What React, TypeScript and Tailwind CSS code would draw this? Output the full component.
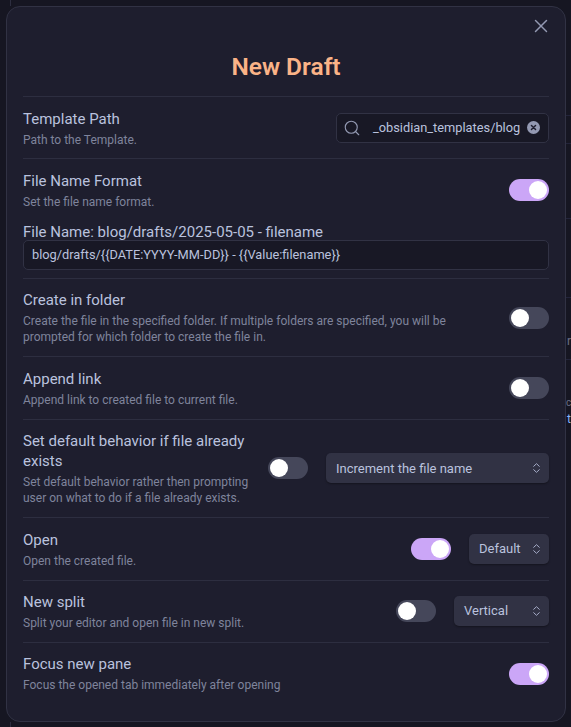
import { Search, X } from "lucide-react";

function Toggle({ on }: { on?: boolean }) {
  return (
    <div className={`flex h-[22px] w-10 shrink-0 items-center rounded-full px-0.5 ${on ? "justify-end bg-[#cba6f7]" : "justify-start bg-[#45475a]"}`}>
      <div className="h-[18px] w-[18px] rounded-full bg-white"></div>
    </div>
  );
}

function Select({ label, width }: { label: string; width: string }) {
  return (
    <div className={`flex h-[30px] shrink-0 items-center justify-between rounded-[5px] bg-[#313244] pl-[10px] pr-[9px] text-[13px] text-[#bac2de] shadow-[0_1px_2px_rgba(0,0,0,0.35)] ${width}`}>
      <span>{label}</span>
      <svg width="7" height="10" viewBox="0 0 7 10" fill="none" stroke="#a6adc8" strokeWidth="1" strokeLinecap="round" strokeLinejoin="round">
        <path d="M0.7 3.3 L3.5 0.7 L6.3 3.3" />
        <path d="M0.7 6.7 L3.5 9.3 L6.3 6.7" />
      </svg>
    </div>
  );
}

function Info({ title, desc }: { title: string; desc: string }) {
  return (
    <div className="min-w-0 flex-1 pb-[10.9px] pt-[11.5px]">
      <div className="text-[15px] leading-[20px] text-[#bac2de]">{title}</div>
      <div className="mt-[3px] text-[12px] leading-[16px] text-[#7f849c]">{desc}</div>
    </div>
  );
}

function Row({ title, desc, children, gap = "gap-[18px]" }: { title: string; desc: string; children?: React.ReactNode; gap?: string }) {
  return (
    <div className={`flex items-center border-t border-[#2d2e40] ${gap}`}>
      <Info title={title} desc={desc} />
      {children}
    </div>
  );
}

export default function App() {
  return (
    <div className="relative h-[727px] w-[571px] overflow-hidden bg-[#161622] pl-[6px] pt-[6px] font-['Roboto',sans-serif]">
      {/* Page showing behind the modal */}
      <div className="absolute left-[10px] top-0 h-[6px] w-px bg-[#2d2e40]"></div>
      <div className="absolute bottom-0 left-[10px] h-[5px] w-px bg-[#2d2e40]"></div>
      <div className="absolute left-[566px] top-[115px] h-px w-[5px] bg-[#23243a]"></div>
      <div className="absolute left-[566px] top-[143px] h-px w-[5px] bg-[#23243a]"></div>
      <div className="absolute left-[566px] top-[218px] h-px w-[5px] bg-[#23243a]"></div>
      <div className="absolute left-[566px] top-[297px] h-px w-[5px] bg-[#23243a]"></div>
      <div className="absolute left-[566px] top-[359px] h-px w-[5px] bg-[#23243a]"></div>
      <div className="absolute left-[567px] top-[333px] text-[12px] leading-[16px] text-[#6c7086]">r</div>
      <div className="absolute left-[566px] top-[395px] text-[10px] leading-[16px] text-[#6c7086]">c</div>
      <div className="absolute left-[567px] top-[411px] text-[12px] leading-[16px] text-[#89b4fa]">t</div>

      <div className="relative h-[716px] w-[560px] rounded-[14px] border border-[#313244] bg-[#1e1e2e] px-4">
        {/* Header */}
        <div className="flex justify-end pt-[8px]">
          <X className="-mr-[3px] h-[22px] w-[22px] text-[#9399b2]" strokeWidth={1.6} />
        </div>
        <h1 className="mt-[14px] text-center text-[24.5px] font-semibold leading-[32px] text-[#fab387]">New Draft</h1>
        <div className="h-[13px]"></div>

        <Row title="Template Path" desc="Path to the Template.">
          <div className="flex h-[30px] w-[213px] shrink-0 items-center rounded-[5px] border border-[#313244] bg-[#181825] pl-[6px] pr-[8px] text-[#bac2de]">
            <Search className="h-[18px] w-[18px] shrink-0 text-[#9399b2]" strokeWidth={1.5} />
            <span className="ml-[12px] flex-1 whitespace-nowrap text-[12.8px]">_obsidian_templates/blog</span>
            <svg width="13" height="13" viewBox="0 0 14 14" className="shrink-0">
              <circle cx="7" cy="7" r="7" fill="#9399b2" />
              <path d="M4.8 4.8 L9.2 9.2 M9.2 4.8 L4.8 9.2" stroke="#1e1e2e" strokeWidth="1.6" strokeLinecap="round" />
            </svg>
          </div>
        </Row>

        <div className="border-t border-[#2d2e40] pb-[8.2px]">
          <div className="flex items-center">
            <Info title="File Name Format" desc="Set the file name format." />
            <Toggle on />
          </div>
          <div className="h-[20px] text-[15px] leading-[22px] text-[#bac2de]">File Name: blog/drafts/2025-05-05 - filename</div>
          <div className="-mt-px flex h-[30px] items-center rounded-[5px] border border-[#313244] bg-[#181825] px-2 text-[12.8px] text-[#bac2de]">
            {"blog/drafts/{{DATE:YYYY-MM-DD}} - {{Value:filename}}"}
          </div>
        </div>

        <Row title="Create in folder" desc="Create the file in the specified folder. If multiple folders are specified, you will be prompted for which folder to create the file in." gap="gap-[48px]">
          <Toggle />
        </Row>

        <Row title="Append link" desc="Append link to created file to current file.">
          <Toggle />
        </Row>

        <Row title="Set default behavior if file already exists" desc="Set default behavior rather then prompting user on what to do if a file already exists.">
          <Toggle />
          <Select label="Increment the file name" width="w-[223px]" />
        </Row>

        <Row title="Open" desc="Open the created file.">
          <Toggle on />
          <Select label="Default" width="w-20" />
        </Row>

        <Row title="New split" desc="Split your editor and open file in new split.">
          <Toggle />
          <Select label="Vertical" width="w-[95px]" />
        </Row>

        <Row title="Focus new pane" desc="Focus the opened tab immediately after opening">
          <Toggle on />
        </Row>
      </div>
    </div>
  );
}
